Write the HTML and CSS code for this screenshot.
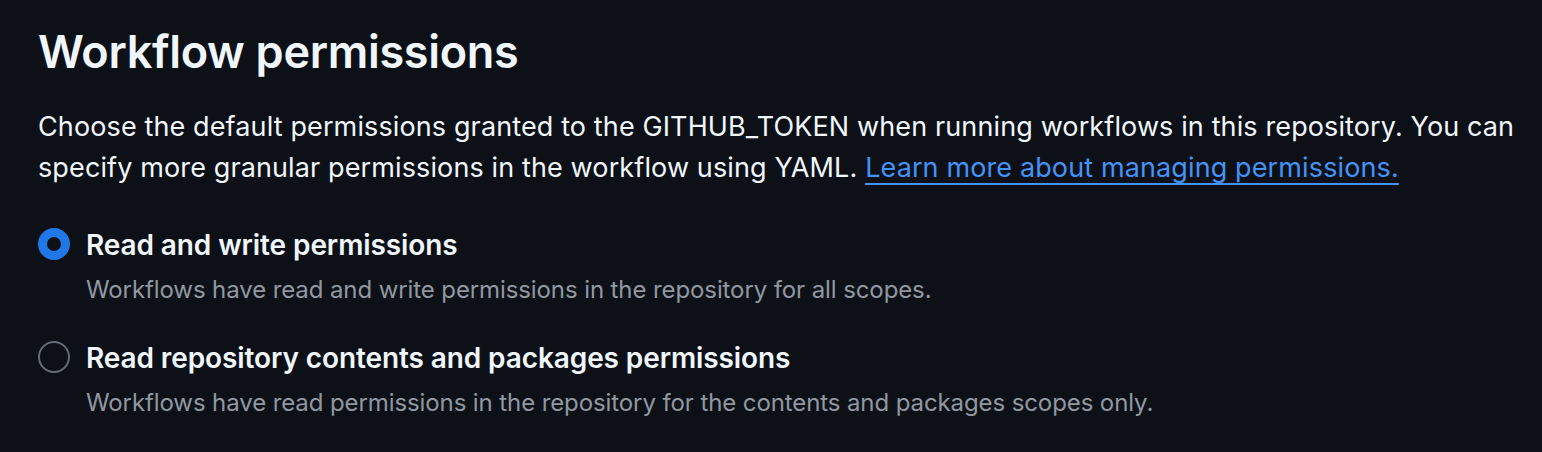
FILE: index.html
```html
<!DOCTYPE html>
<html lang="en">
<head>
<meta charset="utf-8">
<title>Workflow permissions</title>
<link rel="stylesheet" href="styles.css">
</head>
<body>
<main class="section">
  <h2 class="title">Workflow permissions</h2>
  <p class="intro">Choose the default permissions granted to the GITHUB_TOKEN when running workflows in this repository. You can specify more granular permissions in the workflow using YAML. <a class="link" href="#">Learn more about managing permissions.</a></p>
  <div class="options">
    <label class="option">
      <span class="radio radio-checked"></span>
      <span class="option-text">
        <span class="option-label">Read and write permissions</span>
        <span class="option-caption">Workflows have read and write permissions in the repository for all scopes.</span>
      </span>
    </label>
    <label class="option">
      <span class="radio"></span>
      <span class="option-text">
        <span class="option-label">Read repository contents and packages permissions</span>
        <span class="option-caption">Workflows have read permissions in the repository for the contents and packages scopes only.</span>
      </span>
    </label>
  </div>
</main>
</body>
</html>
```
FILE: styles.css
```css
html, body {
  margin: 0;
  padding: 0;
  background: #0d1117;
}
body {
  font-family: Inter, "Noto Sans", "Liberation Sans", sans-serif;
  color: #f0f6fc;
}
.section {
  padding: 12px 20px 0 38px;
}
.title {
  margin: 0;
  font-size: 45px;
  font-weight: 600;
  line-height: 80px;
  letter-spacing: -0.3px;
}
.intro {
  margin: 14px 0 0 0;
  font-size: 27px;
  line-height: 41px;
  font-weight: 400;
  letter-spacing: 0.12px;
}
.link {
  color: #4493f8;
  text-decoration: underline;
  text-underline-offset: 6px;
  text-decoration-thickness: 2px;
}
.options {
  margin-top: 37px;
  display: flex;
  flex-direction: column;
  gap: 29px;
}
.option {
  display: flex;
  gap: 16px;
  align-items: flex-start;
}
.radio {
  flex: none;
  width: 32px;
  height: 32px;
  box-sizing: border-box;
  border-radius: 50%;
  border: 2px solid #656c76;
  margin-top: 3px;
}
.radio-checked {
  border: 9px solid #1f78e8;
}
.option-text {
  display: flex;
  flex-direction: column;
  gap: 6px;
}
.option-label {
  font-size: 28px;
  font-weight: 600;
  line-height: 40px;
  letter-spacing: -0.1px;
}
.option-caption {
  font-size: 24px;
  line-height: 38px;
  letter-spacing: -0.1px;
  color: #9198a1;
}
```
